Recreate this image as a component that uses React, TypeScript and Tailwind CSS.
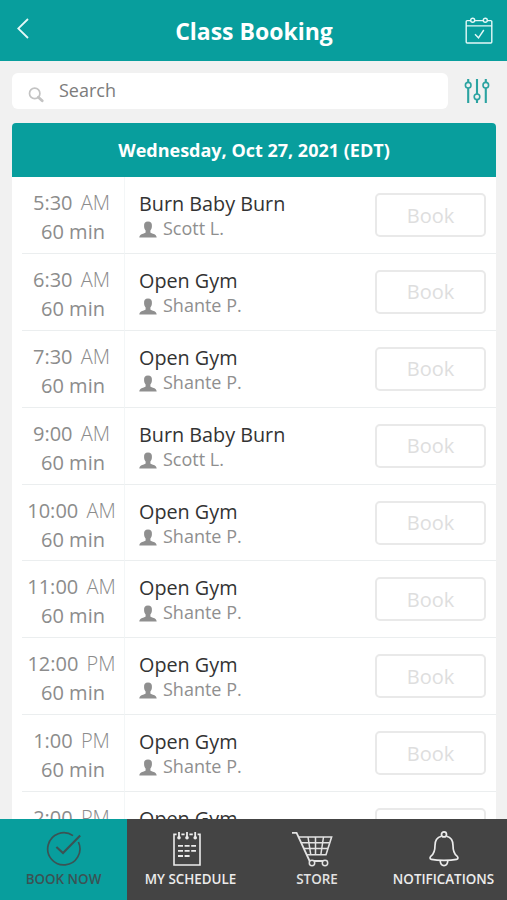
const classes = [
  { time: '5:30', period: 'AM', title: 'Burn Baby Burn', trainer: 'Scott L.' },
  { time: '6:30', period: 'AM', title: 'Open Gym', trainer: 'Shante P.' },
  { time: '7:30', period: 'AM', title: 'Open Gym', trainer: 'Shante P.' },
  { time: '9:00', period: 'AM', title: 'Burn Baby Burn', trainer: 'Scott L.' },
  { time: '10:00', period: 'AM', title: 'Open Gym', trainer: 'Shante P.' },
  { time: '11:00', period: 'AM', title: 'Open Gym', trainer: 'Shante P.' },
  { time: '12:00', period: 'PM', title: 'Open Gym', trainer: 'Shante P.' },
  { time: '1:00', period: 'PM', title: 'Open Gym', trainer: 'Shante P.' },
  { time: '2:00', period: 'PM', title: 'Open Gym', trainer: 'Shante P.' },
]

const BackIcon = () => (
  <svg width="12" height="21" viewBox="0 0 12 21" fill="none" stroke="currentColor" strokeWidth="1.8">
    <path d="M11 1 L1.2 10.5 L11 20" />
  </svg>
)

const CalendarIcon = () => (
  <svg width="28" height="28" viewBox="0 0 28 28" fill="none" stroke="currentColor" strokeWidth="1.4">
    <path d="M5.7 3.6 H2.2 a1 1 0 0 0 -1 1 V25 a1 1 0 0 0 1 1 H25.8 a1 1 0 0 0 1 -1 V4.6 a1 1 0 0 0 -1 -1 H22.3 M9.7 3.6 H18.3 M1.2 8.9 H26.8" />
    <circle cx="7.7" cy="3.2" r="2" />
    <circle cx="20.3" cy="3.2" r="2" />
    <path d="M10 17.3 L13.5 20.8 L18.8 13" />
  </svg>
)

const SearchIcon = () => (
  <svg width="16" height="16" viewBox="0 0 16 16" fill="none" stroke="currentColor">
    <circle cx="6.7" cy="6.4" r="5.2" strokeWidth="1.7" />
    <path d="M10.4 10.2 L14.2 13.8" strokeWidth="2.8" strokeLinecap="round" />
  </svg>
)

const FilterIcon = () => (
  <svg width="26" height="26" viewBox="0 0 26 26" fill="none" stroke="currentColor" strokeWidth="2.1">
    <path d="M4.2 1 V4.4 M4.2 10 V25 M13 1 V16 M13 21.6 V25 M21.8 1 V4.4 M21.8 10 V25" />
    <g strokeWidth="1.6">
      <circle cx="4.2" cy="7.2" r="2.8" />
      <circle cx="13" cy="18.8" r="2.8" />
      <circle cx="21.8" cy="7.2" r="2.8" />
    </g>
  </svg>
)

const PersonIcon = () => (
  <svg width="18" height="17" viewBox="0 0 18 17" fill="currentColor">
    <path d="M9 0.4 C12 0.4 13.1 2 12.9 4.6 C13.1 6.9 12.3 8.6 11.4 9.6 V11.4 C12.6 12.8 17.5 12.4 17.7 16.6 H0.3 C0.5 12.4 5.4 12.8 6.6 11.4 V9.6 C5.7 8.6 4.9 6.9 5.1 4.6 C4.9 2 6 0.4 9 0.4 Z" />
  </svg>
)

const BookIcon = () => (
  <svg width="36" height="36" viewBox="0 0 36 36" fill="none" stroke="currentColor" strokeWidth="1.7">
    <path d="M27 4.6 A16.1 16.1 0 1 0 32.4 11" />
    <path d="M10.4 16 L17 22 L34.2 4.4" strokeWidth="2.1" />
  </svg>
)

const ScheduleIcon = () => (
  <svg width="28" height="36" viewBox="0 0 28 36" fill="none" stroke="currentColor" strokeWidth="1.6">
    <path d="M3.6 3.4 H1 V34 H27 V3.4 H24.6 M8.4 3.4 H11.6 M16.4 3.4 H19.8" />
    <path d="M6 1 V7.2 M14 1 V7.2 M22.2 1 V7.2" strokeWidth="1.8" />
    <g fill="currentColor" stroke="none">
      <circle cx="6" cy="6.8" r="1.8" />
      <circle cx="14" cy="6.8" r="1.8" />
      <circle cx="22.2" cy="6.8" r="1.8" />
    </g>
    <path d="M5 14.8 H23 M5 19.8 H23 M5 25 H16.6" strokeWidth="1.8" strokeDasharray="5 1.6" />
  </svg>
)

const CartIcon = () => (
  <svg width="42" height="36" viewBox="0 0 42 36" fill="none" stroke="currentColor" strokeWidth="1.5">
    <path d="M1 1.8 H5.6 L18.6 30 H36" strokeWidth="1.8" />
    <path d="M7.8 6 H40.6 L35 23.8 H15.8" strokeWidth="1.6" />
    <path d="M10.5 11.8 H38.8 M13 17.6 H37 M17 6 L19.8 23.8 M24.5 6 V23.8 M32.5 6 L29.8 23.8" />
    <circle cx="21" cy="32" r="2.7" fill="#444" />
    <circle cx="34" cy="32" r="2.7" fill="#444" />
  </svg>
)

const BellIcon = () => (
  <svg width="30" height="36" viewBox="0 0 30 36" fill="none" stroke="currentColor" strokeWidth="1.7">
    <circle cx="15" cy="3.4" r="2.5" />
    <path d="M12.4 5.2 C7.6 6.4 6 10 6 14.4 C6 20.4 4.8 22.8 2.2 24.8 C0.6 26.2 0.6 28.2 2.4 28.4 C9 29.8 21 29.8 27.6 28.4 C29.4 28.2 29.4 26.2 27.8 24.8 C25.2 22.8 24 20.4 24 14.4 C24 10 22.4 6.4 17.6 5.2" />
    <path d="M11.2 29.8 C11.4 33 12.8 34.6 15 34.6 C17.2 34.6 18.6 33 18.8 29.8" />
  </svg>
)

const tabs = [
  { label: 'BOOK NOW', Icon: BookIcon, style: 'bg-[#089e9d] text-[#3b5354]', iconStyle: 'pl-px' },
  { label: 'MY SCHEDULE', Icon: ScheduleIcon, style: 'text-[#ececec]', iconStyle: 'pr-[7px]' },
  { label: 'STORE', Icon: CartIcon, style: 'text-[#e2e2e2]', iconStyle: 'pr-2.5' },
  { label: 'NOTIFICATIONS', Icon: BellIcon, style: 'text-[#ececec]', iconStyle: '' },
]

const ClassRow = ({ time, period, title, trainer }: any) => (
  <li className="flex h-[76.9px] shrink-0 pl-2.5">
    <div className="w-[103px] shrink-0 border-r border-b border-r-[#f3f6f7] border-b-[#ebeeef] pt-[11px] text-center text-[20px] leading-[29px] text-[#8c8c8c]">
      <p className="pr-[3px] whitespace-nowrap">
        {time} <span className="ml-[3px] font-light">{period}</span>
      </p>
      <p>60 min</p>
    </div>
    <div className="flex grow justify-between border-b border-[#ebeeef] pr-2.5 pl-3.5">
      <div className="pt-[13px]">
        <h3 className="text-[19.8px] leading-[27px] text-[#333]">{title}</h3>
        <p className="flex items-center gap-1.5 text-[18px] leading-[23px] text-[#8f8f8f]">
          <span className="pt-0.5">
            <PersonIcon />
          </span>
          {trainer}
        </p>
      </div>
      <button className="mt-4 h-11 w-[111px] rounded-[5px] border-2 border-[#e9e9e9] pt-px text-[20px] text-[#dedede]">
        Book
      </button>
    </div>
  </li>
)

export default function App() {
  return (
    <div className="flex h-[900px] w-[507px] flex-col overflow-hidden bg-[#f1f1f1] font-['Open_Sans',sans-serif]">
      <header className="flex h-[61px] shrink-0 items-center justify-between bg-[#089e9d] pr-3.5 pl-[17px] text-[#e4f8f7]">
        <div className="w-[26px] pb-1">
          <BackIcon />
        </div>
        <h1 className="pt-0.5 text-[23px] font-bold text-white">Class Booking</h1>
        <CalendarIcon />
      </header>

      <div className="flex h-[62px] shrink-0 items-center gap-4 px-3 pb-0.5">
        <div className="flex h-9 w-[436px] items-center gap-[15px] rounded-md bg-white pl-4 text-[18px] text-[#7c7c7c]">
          <span className="pt-2 text-[#c3c3c3]">
            <SearchIcon />
          </span>
          <span className="pb-0.5">Search</span>
        </div>
        <div className="text-[#2ba3a1]">
          <FilterIcon />
        </div>
      </div>

      <main className="mr-[11px] ml-3 flex min-h-0 grow flex-col overflow-hidden rounded-t-[4px] bg-white">
        <h2 className="flex h-[54px] shrink-0 items-center justify-center bg-[#089e9d] text-[18px] font-bold text-white">
          Wednesday, Oct 27, 2021 (EDT)
        </h2>
        <ul className="flex flex-col">
          {classes.map((item) => (
            <ClassRow key={item.time} {...item} />
          ))}
        </ul>
      </main>

      <nav className="grid h-[81px] shrink-0 grid-cols-[127px_127px_126px_127px] bg-[#444]">
        {tabs.map(({ label, Icon, style, iconStyle }) => (
          <a key={label} className={`flex flex-col items-center gap-[3px] pt-3 ${style}`}>
            <span className={iconStyle}>
              <Icon />
            </span>
            <span className="text-[13.4px] leading-[19px] font-semibold whitespace-nowrap">{label}</span>
          </a>
        ))}
      </nav>
    </div>
  )
}
